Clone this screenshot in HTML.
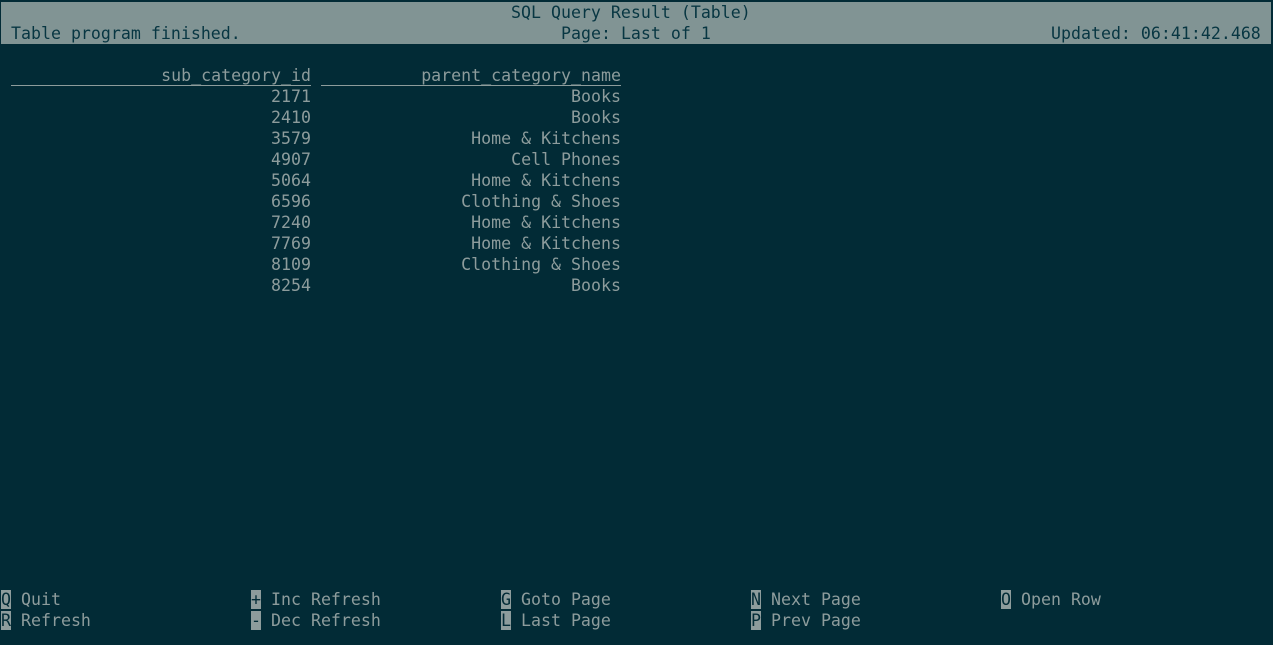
<!DOCTYPE html>
<html><head><meta charset="utf-8"><style>
html,body{margin:0;padding:0;}
body{width:1273px;height:645px;background:#022b36;overflow:hidden;position:relative;font-family:"DejaVu Sans Mono","Liberation Mono",monospace;font-size:16.6px;color:#8d9c9c;}
.bar{position:absolute;left:1px;top:2px;width:1270px;height:42px;background:#819494;}
.l{position:absolute;white-space:pre;line-height:21px;height:21px;}
.d{color:#073642;}
.u{border-bottom:1px solid #8d9c9c;height:20px;}
.k{background:#8d9c9c;color:#022b36;}
</style></head><body>
<div class="bar"></div>
<div class="l d" style="left:511px;top:2px">SQL Query Result (Table)</div>
<div class="l d" style="left:11px;top:23px">Table program finished.</div>
<div class="l d" style="left:561px;top:23px">Page: Last of 1</div>
<div class="l d" style="left:1051px;top:23px">Updated: 06:41:42.468</div>

<div class="l u" style="left:11px;top:65px;width:300px;text-align:right">sub_category_id</div>
<div class="l u" style="left:321px;top:65px;width:300px;text-align:right">parent_category_name</div>

<div class="l" style="left:11px;top:86px;width:300px;text-align:right">2171
2410
3579
4907
5064
6596
7240
7769
8109
8254</div>
<div class="l" style="left:321px;top:86px;width:300px;text-align:right">Books
Books
Home &amp; Kitchens
Cell Phones
Home &amp; Kitchens
Clothing &amp; Shoes
Home &amp; Kitchens
Home &amp; Kitchens
Clothing &amp; Shoes
Books</div>

<div class="l" style="left:1px;top:589px"><span class="k">Q</span> Quit
<span class="k">R</span> Refresh</div>
<div class="l" style="left:251px;top:589px"><span class="k">+</span> Inc Refresh
<span class="k">-</span> Dec Refresh</div>
<div class="l" style="left:501px;top:589px"><span class="k">G</span> Goto Page
<span class="k">L</span> Last Page</div>
<div class="l" style="left:751px;top:589px"><span class="k">N</span> Next Page
<span class="k">P</span> Prev Page</div>
<div class="l" style="left:1001px;top:589px"><span class="k">O</span> Open Row</div>
</body></html>
